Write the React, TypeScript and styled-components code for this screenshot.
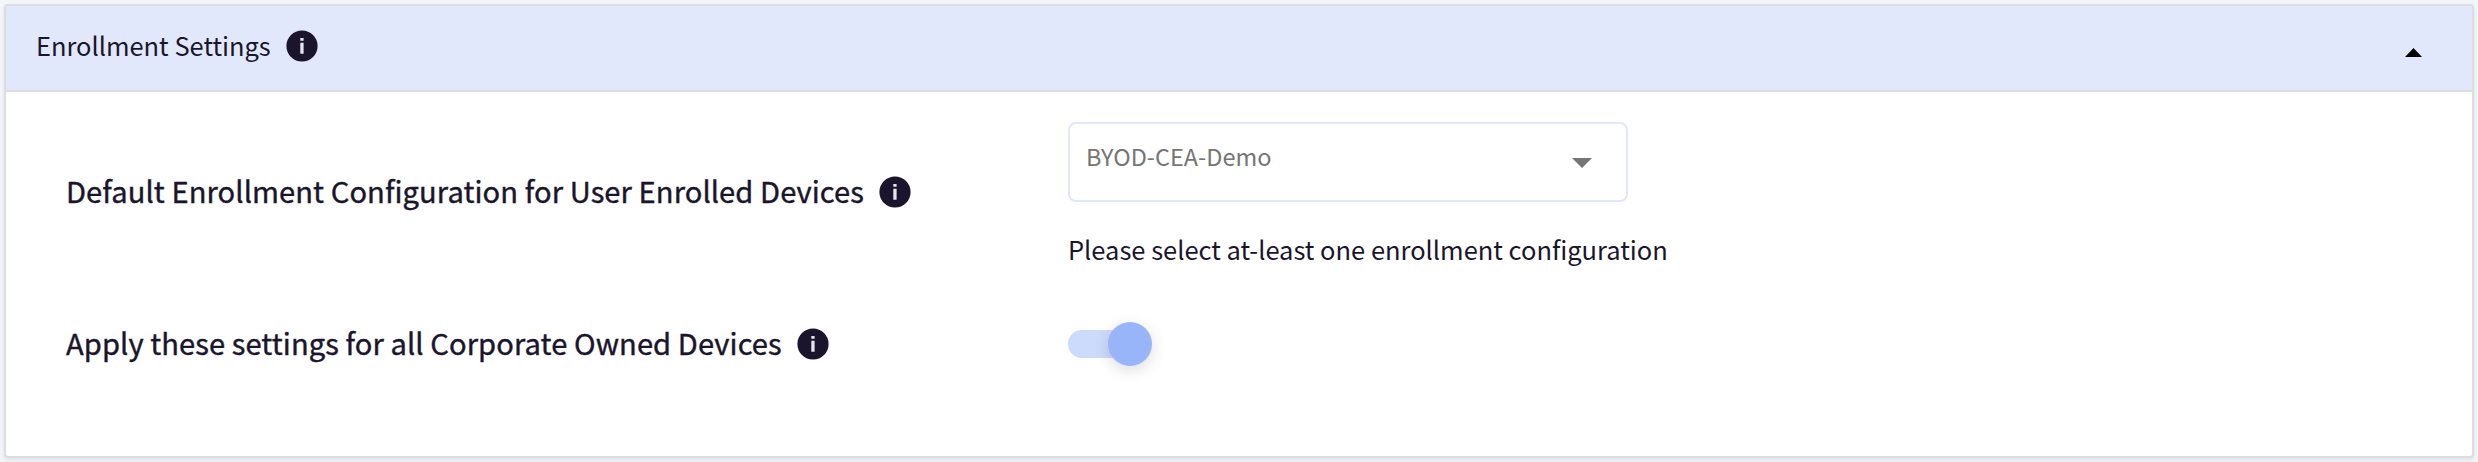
import { useState } from 'react';
import styled, { createGlobalStyle } from 'styled-components';

const GlobalStyle = createGlobalStyle`
  * {
    box-sizing: border-box;
  }

  body {
    margin: 0;
    background: #f4f5fa;
    color: #1a152c;
    font-family: 'Noto Sans CJK SC', 'Noto Sans', sans-serif;
  }
`;

const Page = styled.div`
  height: 462px;
  padding: 4px;
  overflow: hidden;
`;

const Panel = styled.section`
  height: 454px;
  border: 2px solid #dcdddd;
  border-radius: 4px;
  background: #fff;
  box-shadow: 0 2px 4px rgba(0, 0, 0, 0.08);
`;

const PanelHeader = styled.header`
  display: flex;
  align-items: center;
  height: 86px;
  padding: 0 50px 0 30px;
  border-bottom: 2px solid #dcdddd;
  background: #e2e8fc;
`;

const Title = styled.h2`
  margin: 0 15px 6px 0;
  font-size: 25.45px;
  font-weight: 400;
  line-height: 40px;
  white-space: nowrap;
`;

const InfoIcon = styled.svg`
  flex: none;
  display: block;
  width: 32px;
  height: 32px;
`;

const HeaderInfo = styled.span`
  margin-bottom: 4px;
`;

const CollapseButton = styled.button`
  display: flex;
  margin: 8px 0 0 auto;
  padding: 0;
  border: none;
  background: none;
  cursor: pointer;
`;

const PanelBody = styled.div`
  padding: 30px 60px;
`;

const Row = styled.div<{ $height: number }>`
  display: grid;
  grid-template-columns: 1002px 1fr;
  height: ${({ $height }) => $height}px;
`;

const LabelCell = styled.div<{ $height: number }>`
  display: flex;
  align-items: center;
  gap: 15px;
  height: ${({ $height }) => $height}px;
`;

const Label = styled.span`
  margin-bottom: 5px;
  font-size: 29.1px;
  font-weight: 400;
  line-height: 44px;
  letter-spacing: 0.09px;
  white-space: nowrap;
  -webkit-text-stroke: 0.4px currentColor;
`;

const Select = styled.button`
  display: flex;
  justify-content: space-between;
  width: 560px;
  height: 80px;
  padding: 12px 34px 0 16px;
  border: 2px solid #e1e8fe;
  border-radius: 8px;
  background: #fff;
  color: #757575;
  font-family: inherit;
  font-size: 23.5px;
  line-height: 40px;
  cursor: pointer;
`;

const SelectArrow = styled.svg`
  margin-top: 22px;
`;

const Hint = styled.p`
  margin: 27px 0 0;
  font-size: 25.48px;
  line-height: 40px;
  white-space: nowrap;
`;

const Toggle = styled.button<{ $on: boolean }>`
  display: flex;
  align-items: center;
  justify-content: ${({ $on }) => ($on ? 'flex-end' : 'flex-start')};
  width: 72px;
  height: 28px;
  margin: 16px 0;
  padding: 0;
  border: none;
  border-radius: 14px;
  background: ${({ $on }) => ($on ? '#ccdafc' : '#c9c9cf')};
  cursor: pointer;
`;

const Thumb = styled.span<{ $on: boolean }>`
  flex: none;
  width: 44px;
  height: 44px;
  margin: 0 -12px 0 0;
  border-radius: 50%;
  background: ${({ $on }) => ($on ? '#99b5fa' : '#fafafa')};
  box-shadow: 0 4px 16px rgba(0, 0, 0, 0.14);
`;

function Info() {
  return (
    <InfoIcon viewBox="0 0 32 32">
      <circle cx="16" cy="16" r="15.6" fill="#1a152c" />
      <path d="M14.3 8h3.3v2.8h-3.3zM14.3 12.7h3.3v11.1h-3.3z" fill="#e6e6ea" />
    </InfoIcon>
  );
}

export default function App() {
  const [open, setOpen] = useState(true);
  const [applyAll, setApplyAll] = useState(true);

  return (
    <>
      <GlobalStyle />
      <Page>
        <Panel>
          <PanelHeader>
            <Title>Enrollment Settings</Title>
            <HeaderInfo>
              <Info />
            </HeaderInfo>
            <CollapseButton onClick={() => setOpen(!open)}>
              <svg width="17" height="9" viewBox="0 0 17 9">
                <path d={open ? 'M0 9 8.5 0 17 9z' : 'M0 0 8.5 9 17 0z'} />
              </svg>
            </CollapseButton>
          </PanelHeader>
          {open && (
            <PanelBody>
              <Row $height={192}>
                <LabelCell $height={140}>
                  <Label>Default Enrollment Configuration for User Enrolled Devices</Label>
                  <Info />
                </LabelCell>
                <div>
                  <Select>
                    <span>BYOD-CEA-Demo</span>
                    <SelectArrow width="20" height="10" viewBox="0 0 20 10">
                      <path d="M0 0h20L10 10z" fill="#757575" />
                    </SelectArrow>
                  </Select>
                  <Hint>Please select at-least one enrollment configuration</Hint>
                </div>
              </Row>
              <Row $height={60}>
                <LabelCell $height={60}>
                  <Label>Apply these settings for all Corporate Owned Devices</Label>
                  <Info />
                </LabelCell>
                <Toggle $on={applyAll} onClick={() => setApplyAll(!applyAll)}>
                  <Thumb $on={applyAll} />
                </Toggle>
              </Row>
            </PanelBody>
          )}
        </Panel>
      </Page>
    </>
  );
}
